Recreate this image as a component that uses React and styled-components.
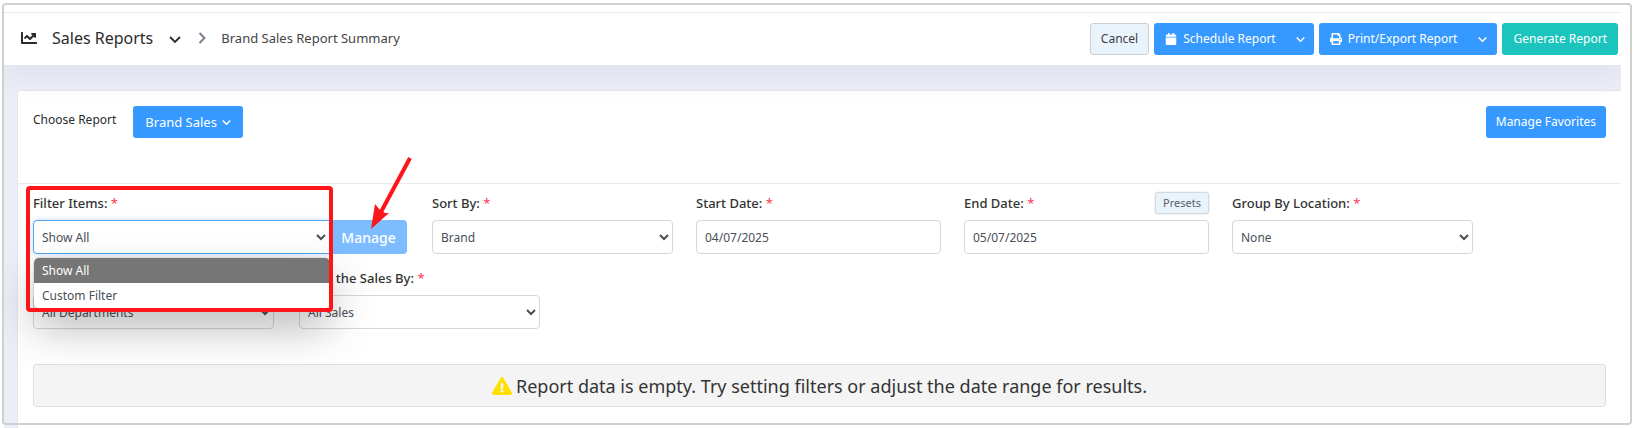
import React from 'react';
import styled, { createGlobalStyle, css } from 'styled-components';
import { FaChartLine, FaCalendar, FaPrint, FaExclamationTriangle } from 'react-icons/fa';

const Global = createGlobalStyle`
  *, *::before, *::after { box-sizing: border-box; }
  body {
    margin: 0;
    background: #fff;
    color: #2b2b2b;
    font: 400 13px/20px "Noto Sans", "Open Sans", sans-serif;
    overflow: hidden;
  }
  button, select, input { font-family: inherit; }
`;

const Screen = styled.div`
  position: relative;
  padding: 12px 14px 0 4px;
`;

const Frame = styled.div`
  position: absolute;
  z-index: 5;
  inset: 3px 3px 3px 2px;
  border: 2px solid #d1d0d0;
  border-radius: 4px;
  pointer-events: none;
`;

const PageHeader = styled.header`
  position: relative;
  z-index: 1;
  display: flex;
  align-items: center;
  justify-content: space-between;
  padding: 10px 3px 10px 17px;
  border-top: 1px solid #ebebeb;
  background: #fff;
  box-shadow: 0 10px 30px rgba(82, 63, 105, 0.08);
  clip-path: inset(0 0 -50px 0);
`;

const Crumbs = styled.nav`
  display: flex;
  align-items: center;
  padding-bottom: 2px;
  color: #2b2b2b;
`;

const Title = styled.h1`
  margin: 0 16px 0 15px;
  font-size: 16px;
  font-weight: 400;
  line-height: 24px;
`;

const Current = styled.span`
  margin-left: 15px;
  color: #444;
`;

const CaretButton = styled.button`
  display: flex;
  margin-right: 17px;
  padding: 2px 0 0;
  border: 0;
  background: none;
  color: #2b2b2b;
`;

const Actions = styled.div`
  display: flex;
  gap: 5px;
`;

const tones = {
  primary: css`background: #3699ff; color: #fff;`,
  success: css`background: #1bc5bd; color: #fff;`,
  light: css`background: #e9f3fc; color: #3f4047; border-color: #ccd0d4;`,
};

const Button = styled.button`
  display: flex;
  align-items: center;
  justify-content: center;
  gap: ${(p) => p.$gap || 6}px;
  height: 32px;
  padding: 0 ${(p) => p.$pad || 10}px;
  border: 1px solid transparent;
  border-radius: 3px;
  font-size: ${(p) => p.$size || 12}px;
  line-height: 18px;
  white-space: nowrap;
  ${(p) => tones[p.$tone || 'primary']}
`;

const Split = styled.div`
  display: flex;
  ${Button}:first-child { border-radius: 3px 0 0 3px; }
  ${Button}:last-child { border-radius: 0 3px 3px 0; }
`;

const Body = styled.main`
  padding: 25px 0 0 13px;
  background: #ebeef7;
`;

const Card = styled.section`
  min-height: 338px;
  border: 1px solid #e4e6ee;
  border-width: 1px 0 0 1px;
  border-radius: 3px 0 0 0;
  background: #fff;
`;

const ReportBar = styled.div`
  display: flex;
  align-items: flex-start;
  height: 93px;
  padding: 15px 15px 0;
  border-bottom: 1px solid #ebebeb;
`;

const BarLabel = styled.span`
  margin: 4px 17px 0 0;
  font-size: 12px;
`;

const Push = styled.div`
  margin-left: auto;
`;

const Filters = styled.form`
  padding: 8px 15px 0;
`;

const Row = styled.div`
  display: grid;
  grid-template-columns: ${(p) => p.$cols};
  column-gap: ${(p) => p.$gap}px;
  margin-bottom: 13px;
`;

const Field = styled.div`
  position: relative;
  min-width: 0;
`;

const LabelLine = styled.div`
  display: flex;
  align-items: center;
  justify-content: space-between;
  height: 22px;
  margin-bottom: 6px;
`;

const Label = styled.label`
  font-weight: 500;
  color: #333;
  white-space: nowrap;
`;

const Star = styled.span`
  color: #fb4a5e;
`;

const control = css`
  display: block;
  width: 100%;
  height: 34px;
  border: 1px solid #d6d6d6;
  border-radius: 4px;
  background: #fff;
  color: #495057;
  font-size: 12px;
  outline: none;
`;

const Select = styled.select`
  ${control}
  padding: 0 0 0 4px;
  ${(p) => p.$active && css`
    border-color: #57a8ee;
    border-radius: 4px 0 0 4px;
    box-shadow: 0 0 5px rgba(54, 153, 255, 0.35);
  `}
`;

const TextInput = styled.input`
  ${control}
  padding: 0 8px;
`;

const PresetButton = styled.button`
  height: 22px;
  padding: 0 7px;
  border: 1px solid #d3d9de;
  border-radius: 3px;
  background: #e9f3fc;
  box-shadow: 0 0 2px rgba(0, 0, 0, 0.15);
  color: #5a6068;
  font-size: 11px;
  line-height: 18px;
`;

const Group = styled.div`
  display: flex;
  margin-right: 2px;
`;

const ManageButton = styled.button`
  flex: none;
  width: 77px;
  height: 34px;
  padding: 0;
  border: 0;
  border-radius: 0 4px 4px 0;
  background: #7dbcff;
  color: #fff;
  font-size: 14px;
  font-weight: 500;
`;

const Options = styled.ul`
  position: absolute;
  z-index: 2;
  top: 66px;
  left: 1px;
  right: 79px;
  margin: 0;
  padding: 0;
  border-radius: 5px;
  overflow: hidden;
  background: #fff;
  box-shadow: 0 20px 44px rgba(0, 0, 0, 0.28), 0 0 2px rgba(0, 0, 0, 0.3);
  list-style: none;
`;

const Option = styled.li`
  height: 25px;
  padding: 0 8px;
  background: ${(p) => (p.$on ? '#767676' : '#fff')};
  color: ${(p) => (p.$on ? '#fff' : '#495057')};
  font-size: 12px;
  line-height: 25px;
`;

const Highlight = styled.div`
  position: absolute;
  z-index: 3;
  top: -6px;
  left: -7px;
  right: 76px;
  height: 126px;
  border: 4px solid #fd1519;
  border-radius: 4px;
  pointer-events: none;
`;

const Arrow = styled.svg`
  position: absolute;
  z-index: 3;
  top: -36px;
  right: -4px;
  pointer-events: none;
`;

const Empty = styled.p`
  display: flex;
  align-items: center;
  justify-content: center;
  gap: 4px;
  min-height: 43px;
  margin: 35px 15px 0;
  border: 1px solid #dfdfdf;
  border-radius: 3px;
  background: #f4f4f4;
  color: #333;
  font-size: 18px;
  line-height: 26px;
`;

const Chevron = ({ size = 8, stroke = 2 }) => (
  <svg width={size} height={size * 0.75} viewBox="0 0 12 9" aria-hidden="true">
    <path d="M1 2 6 7 11 2" fill="none" stroke="currentColor" strokeWidth={stroke} />
  </svg>
);

const Caption = ({ id, children }) => (
  <Label htmlFor={id}>{children} <Star>*</Star></Label>
);

const Choice = ({ id, label, name, value }) => (
  <Field>
    <LabelLine>{label && <Caption id={id}>{label}</Caption>}</LabelLine>
    <Select id={id} aria-label={name} defaultValue={value}><option>{value}</option></Select>
  </Field>
);

export default function App() {
  return (
    <>
      <Global />
      <Screen>
        <Frame />
        <PageHeader>
          <Crumbs aria-label="Breadcrumb">
            <FaChartLine size={16} />
            <Title>Sales Reports</Title>
            <CaretButton type="button" aria-label="Switch report group"><Chevron size={12} stroke={1.8} /></CaretButton>
            <svg width="8" height="12" viewBox="0 0 8 12" aria-hidden="true">
              <path d="M1.5 1 6.5 6l-5 5" fill="none" stroke="#74788d" strokeWidth="1.8" />
            </svg>
            <Current>Brand Sales Report Summary</Current>
          </Crumbs>
          <Actions>
            <Button type="button" $tone="light">Cancel</Button>
            <Split>
              <Button type="button"><FaCalendar size={12} />Schedule Report</Button>
              <Button type="button" $pad={8} aria-label="Schedule options"><Chevron size={9} /></Button>
            </Split>
            <Split>
              <Button type="button"><FaPrint size={12} />Print/Export Report</Button>
              <Button type="button" $pad={9} aria-label="Export options"><Chevron size={9} /></Button>
            </Split>
            <Button type="button" $tone="success">Generate Report</Button>
          </Actions>
        </PageHeader>
        <Body>
          <Card>
            <ReportBar>
              <BarLabel>Choose Report</BarLabel>
              <Button type="button" $size={13} $pad={11} $gap={5}>Brand Sales <Chevron size={9} /></Button>
              <Push><Button type="button" $pad={9}>Manage Favorites</Button></Push>
            </ReportBar>
            <Filters>
              <Row $cols="376fr 241fr 245fr 245fr 241fr 110fr" $gap={23}>
                <Field>
                  <LabelLine><Caption id="items">Filter Items:</Caption></LabelLine>
                  <Group>
                    <Select id="items" $active defaultValue="Show All">
                      <option>Show All</option>
                      <option>Custom Filter</option>
                    </Select>
                    <ManageButton type="button">Manage</ManageButton>
                  </Group>
                  <Options>
                    <Option $on>Show All</Option>
                    <Option>Custom Filter</Option>
                  </Options>
                  <Highlight />
                  <Arrow width="42" height="74" viewBox="0 0 42 74" aria-hidden="true">
                    <path d="M39 2 10 56" stroke="#fd1519" strokeWidth="4" />
                    <path d="M0 73 4 48l5 6 5 3 4 0z" fill="#fd1519" />
                  </Arrow>
                </Field>
                <Choice id="sort" label="Sort By:" value="Brand" />
                <Field>
                  <LabelLine><Caption id="start">Start Date:</Caption></LabelLine>
                  <TextInput id="start" defaultValue="04/07/2025" />
                </Field>
                <Field>
                  <LabelLine>
                    <Caption id="end">End Date:</Caption>
                    <PresetButton type="button">Presets</PresetButton>
                  </LabelLine>
                  <TextInput id="end" defaultValue="05/07/2025" />
                </Field>
                <Choice id="location" label="Group By Location:" value="None" />
              </Row>
              <Row $cols="241fr 241fr 1041fr" $gap={25}>
                <Choice id="departments" name="Departments" value="All Departments" />
                <Choice id="sales" label="Show the Sales By:" value="All Sales" />
              </Row>
            </Filters>
            <Empty>
              <FaExclamationTriangle size={20} color="#ffe000" />
              Report data is empty. Try setting filters or adjust the date range for results.
            </Empty>
          </Card>
        </Body>
      </Screen>
    </>
  );
}
